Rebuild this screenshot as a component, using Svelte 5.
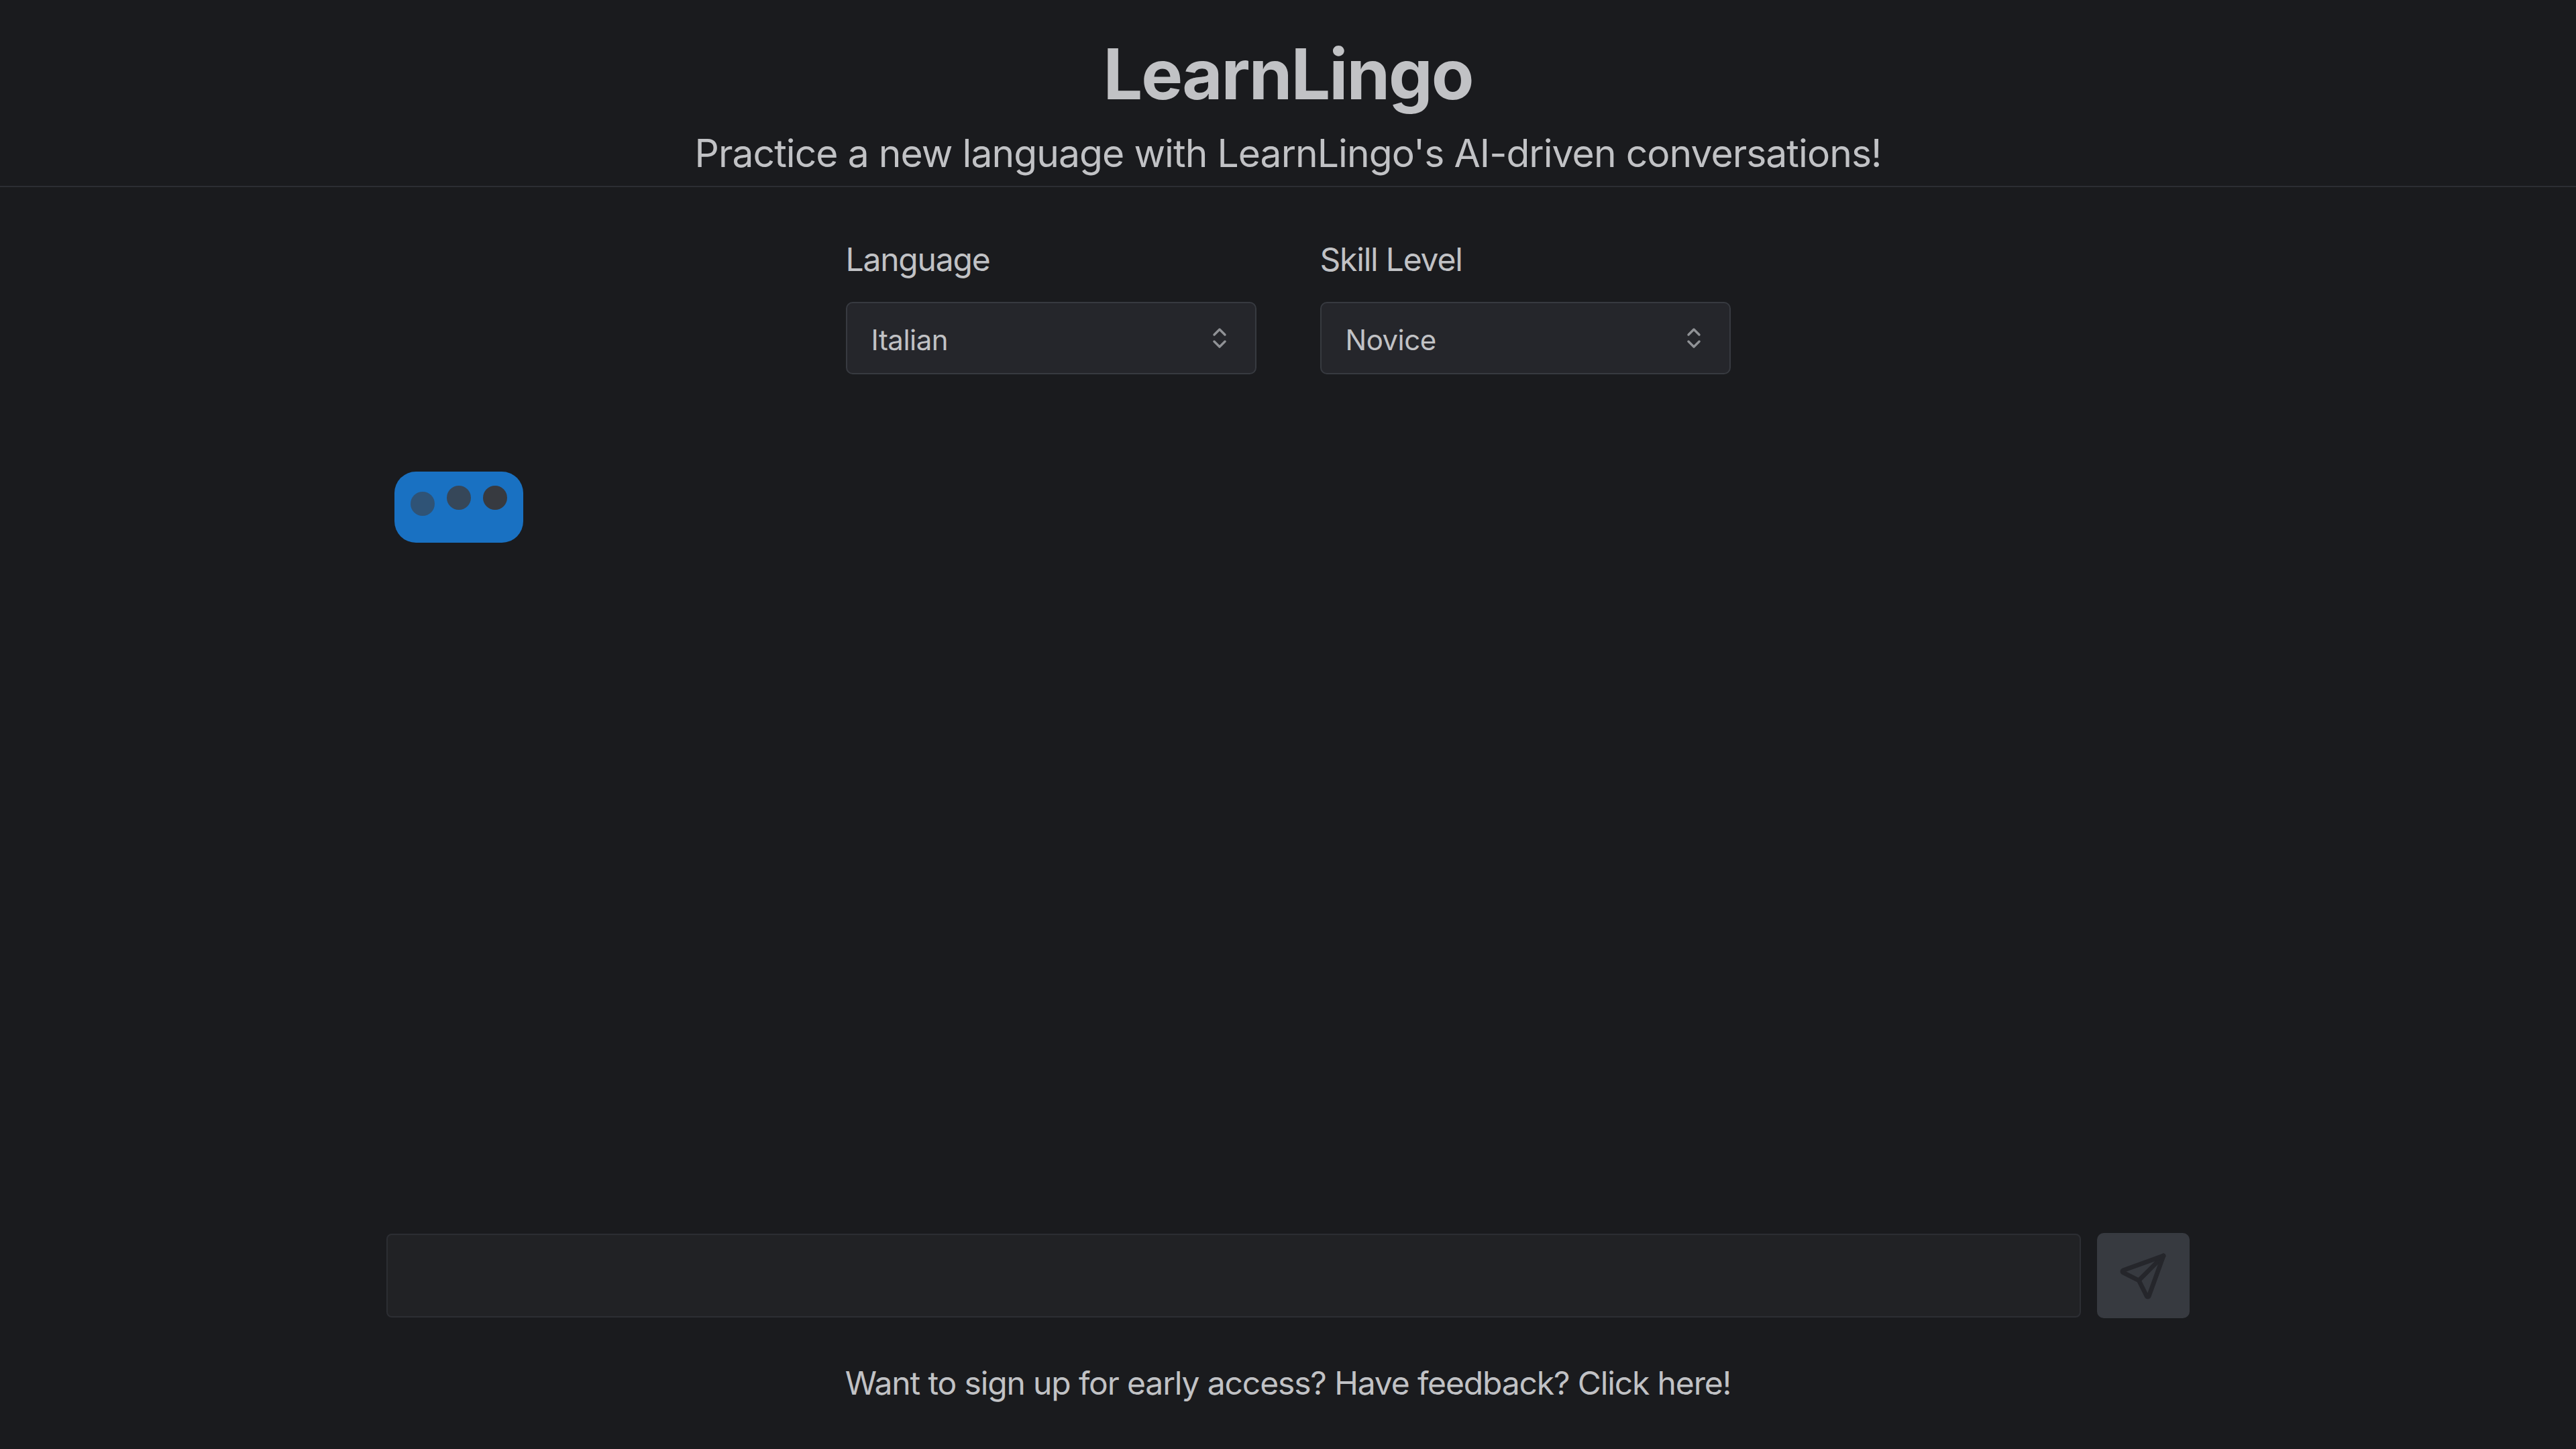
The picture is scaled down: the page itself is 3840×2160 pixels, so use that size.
<script>
    let language = $state("Italian");
    let level = $state("Novice");
    let message = $state("");

    const languages = ["Italian", "Spanish", "French", "German"];
    const levels = ["Novice", "Intermediate", "Advanced"];
</script>

<div class="page">
    <header class="header">
        <h1>LearnLingo</h1>
        <p>Practice a new language with LearnLingo's AI-driven conversations!</p>
    </header>

    <section class="controls">
        <label class="field">
            <span>Language</span>
            <div class="select-wrap">
                <select bind:value={language}>
                    {#each languages as l}
                        <option>{l}</option>
                    {/each}
                </select>
                <svg class="chevrons" viewBox="0 0 24 36" fill="none" stroke="currentColor" stroke-width="3.4" stroke-linecap="round" stroke-linejoin="round">
                    <path d="M4 13 L12 5 L20 13" />
                    <path d="M4 23 L12 31 L20 23" />
                </svg>
            </div>
        </label>
        <label class="field">
            <span>Skill Level</span>
            <div class="select-wrap">
                <select bind:value={level}>
                    {#each levels as l}
                        <option>{l}</option>
                    {/each}
                </select>
                <svg class="chevrons" viewBox="0 0 24 36" fill="none" stroke="currentColor" stroke-width="3.4" stroke-linecap="round" stroke-linejoin="round">
                    <path d="M4 13 L12 5 L20 13" />
                    <path d="M4 23 L12 31 L20 23" />
                </svg>
            </div>
        </label>
    </section>

    <main class="chat">
        <div class="bubble">
            <span class="dot d1"></span>
            <span class="dot d2"></span>
            <span class="dot d3"></span>
        </div>
    </main>

    <form class="composer" onsubmit={(e) => e.preventDefault()}>
        <input type="text" bind:value={message} />
        <button type="submit" aria-label="Send">
            <svg viewBox="0 0 24 24" fill="none" stroke="currentColor" stroke-width="2" stroke-linecap="round" stroke-linejoin="round">
                <path d="M10 14l11 -11" />
                <path d="M21 3l-6.5 18a.55 .55 0 0 1 -1 0l-3.5 -7l-7 -3.5a.55 .55 0 0 1 0 -1l18 -6.5" />
            </svg>
        </button>
    </form>

    <footer class="footer">Want to sign up for early access? Have feedback? Click here!</footer>
</div>

<style>
    :global(body) {
        margin: 0;
        background: #1a1b1e;
    }

    .page {
        height: 2160px;
        display: flex;
        flex-direction: column;
        background: #1a1b1e;
        color: #c1c2c5;
        font-family: Inter, "Liberation Sans", sans-serif;
    }

    .header {
        height: 277px;
        box-sizing: content-box;
        border-bottom: 2px solid #2c2e33;
        text-align: center;
    }

    h1 {
        margin: 0;
        padding-top: 50px;
        font-size: 104px;
        line-height: 120px;
        font-weight: 700;
        letter-spacing: -2px;
    }

    .header p {
        margin: 0;
        padding-top: 21px;
        font-size: 57px;
        line-height: 76px;
        letter-spacing: -0.95px;
    }

    .controls {
        display: flex;
        justify-content: center;
        gap: 95px;
        padding-top: 78px;
    }

    .field {
        width: 612px;
        display: flex;
        flex-direction: column;
        gap: 33px;
    }

    .field > span {
        font-size: 48px;
        line-height: 60px;
        letter-spacing: -1.2px;
    }

    .select-wrap {
        position: relative;
    }

    select {
        width: 100%;
        height: 108px;
        box-sizing: border-box;
        padding: 4px 36px 0;
        appearance: none;
        background: #25262b;
        border: 2px solid #373a40;
        border-radius: 10px;
        color: #c1c2c5;
        font-family: inherit;
        font-size: 42px;
        letter-spacing: -0.5px;
        outline: none;
    }

    .chevrons {
        position: absolute;
        right: 43px;
        top: 36px;
        width: 24px;
        height: 36px;
        color: #909296;
        pointer-events: none;
    }

    .chat {
        flex: 1;
        width: 2688px;
        margin: 0 auto;
        padding: 145px 12px 0;
        box-sizing: border-box;
    }

    .bubble {
        width: 192px;
        height: 106px;
        box-sizing: border-box;
        padding: 0 24px;
        border-radius: 32px;
        background: #1971c2;
        display: flex;
        justify-content: space-between;
    }

    .dot {
        width: 36px;
        height: 36px;
        border-radius: 50%;
    }

    .d1 {
        margin-top: 30px;
        background: #2f5376;
    }

    .d2 {
        margin-top: 21px;
        background: #364759;
    }

    .d3 {
        margin-top: 21px;
        background: #373a40;
    }

    .composer {
        width: 2688px;
        margin: 0 auto;
        display: flex;
        align-items: center;
        gap: 24px;
    }

    input {
        flex: 1;
        height: 125px;
        box-sizing: border-box;
        background: #212225;
        border: 2px solid #2c2e33;
        border-radius: 8px;
        color: #c1c2c5;
        outline: none;
    }

    button {
        width: 138px;
        height: 127px;
        padding: 0;
        border: none;
        border-radius: 10px;
        background: #373a40;
        color: #25262b;
        display: flex;
        align-items: center;
        justify-content: center;
    }

    button svg {
        width: 80px;
        height: 80px;
    }

    .footer {
        height: 195px;
        padding-top: 65px;
        box-sizing: border-box;
        text-align: center;
        font-size: 48px;
        line-height: 64px;
        letter-spacing: -1.14px;
    }
</style>
